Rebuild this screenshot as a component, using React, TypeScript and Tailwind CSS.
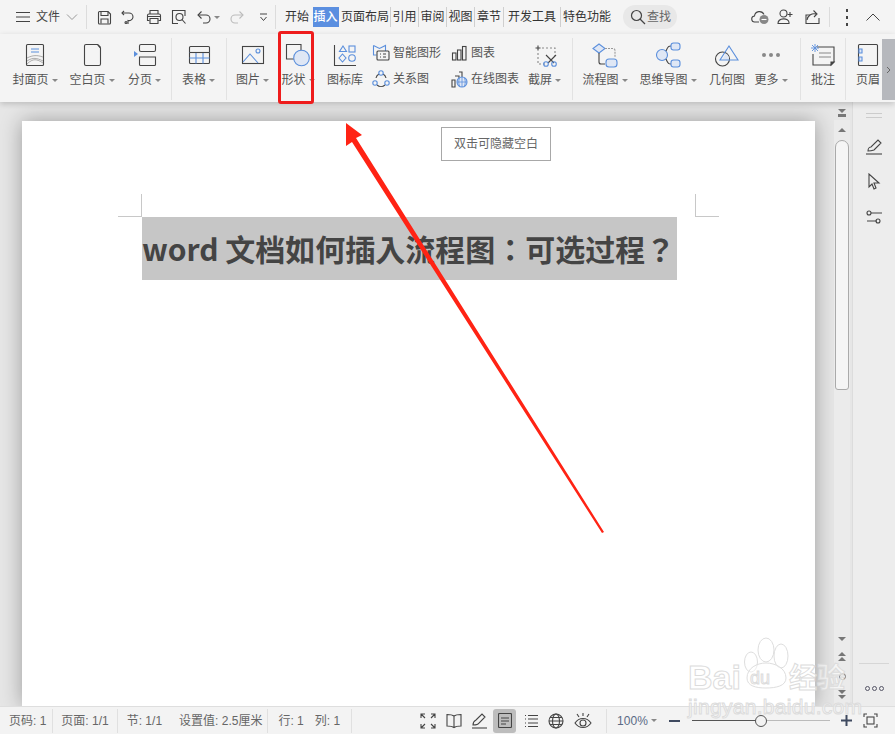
import type { ReactNode } from 'react';

const dark = '#444';
const blue = '#5b8fdc';
const fill = '#dfe7f5';

function Svg({ w, h, children }: { w: number; h: number; children: ReactNode }) {
    return (
        <svg width={w} height={h} viewBox={`0 0 ${w} ${h}`} fill="none" stroke={dark} strokeWidth="1.1" className="block shrink-0">
            {children}
        </svg>
    );
}

function Caret() {
    return <span className="ml-[3px] inline-block h-0 w-0 border-x-[3px] border-t-[3px] border-x-transparent border-t-[#888] align-middle" />;
}

const coverIcon = (
    <Svg w={22} h={24}>
        <rect x="2.5" y="1.5" width="17" height="21" rx="1" />
        <path d="M7 6h8M7 9h8" stroke={blue} />
        <path d="M3 15c6-3 10-3 16-1M3 18c6-4 10-3 16 0M3 21c6-6 10-5 16-1" stroke="#999" strokeWidth="0.8" />
    </Svg>
);
const blankIcon = (
    <Svg w={20} h={24}>
        <path d="M2.5 3a1.5 1.5 0 0 1 1.5-1.5h11.5L18.5 5v16a1.5 1.5 0 0 1-1.5 1.5H4A1.5 1.5 0 0 1 2.5 21z" />
        <path d="M15 1.5h1.5l2 2V6z" fill={dark} stroke="none" />
    </Svg>
);
const breakIcon = (
    <Svg w={24} h={24}>
        <rect x="6.5" y="1.5" width="16" height="7" rx="1.5" />
        <path d="M6.5 14h16v7.5a1 1 0 0 1-1 1h-14a1 1 0 0 1-1-1z" />
        <path d="M1 8l4 3-4 3z" fill={blue} stroke="none" />
    </Svg>
);
const tableIcon = (
    <Svg w={24} h={22}>
        <rect x="2.5" y="2.5" width="20" height="17" rx="1" />
        <path d="M2.5 8.5h20M2.5 14h20M9 8.5v11M16 8.5v11" stroke={blue} />
        <path d="M2.5 8.5h20" stroke={dark} />
    </Svg>
);
const pictureIcon = (
    <Svg w={24} h={22}>
        <rect x="1.5" y="2.5" width="21" height="17" />
        <path d="M2 18l7-8 8 9" stroke={blue} />
        <circle cx="17" cy="7" r="2" stroke={blue} />
    </Svg>
);
const shapeIcon = (
    <Svg w={26} h={24}>
        <path d="M14 16H1.5V1.5H16V8" />
        <circle cx="16.5" cy="15" r="7.8" fill={fill} stroke={blue} />
    </Svg>
);
const iconLibIcon = (
    <Svg w={24} h={24}>
        <path d="M1.5 2v20.5H23" />
        <path d="M10 3l3.5 5.5h-7zM9.5 11l3.5 4-3.5 4-3.5-4z" stroke={blue} />
        <rect x="16" y="3" width="6" height="6" stroke={blue} />
        <circle cx="19" cy="15" r="3.3" stroke={blue} />
    </Svg>
);
const smartIcon = (
    <Svg w={18} h={18}>
        <path d="M1.5 1.5l6 3 6-3V7" stroke={blue} />
        <path d="M1.5 1.5V11h3" stroke={blue} />
        <rect x="5" y="7" width="12" height="9" rx="1" />
        <path d="M8 10h1M11 10h3M8 13h1M11 13h3" />
    </Svg>
);
const relationIcon = (
    <Svg w={18} h={18}>
        <path d="M4 8a6 6 0 0 1 3-4M11 4a6 6 0 0 1 3 4M13 15a6 6 0 0 1-8 0" />
        <circle cx="9" cy="3" r="2.2" stroke={blue} />
        <circle cx="3" cy="13" r="2.2" stroke={blue} />
        <circle cx="15" cy="13" r="2.2" stroke={blue} />
    </Svg>
);
const chartIcon = (
    <Svg w={16} h={16}>
        <rect x="1.5" y="8" width="3.5" height="7" />
        <rect x="6.5" y="5" width="3.5" height="10" />
        <rect x="11.5" y="1.5" width="3.5" height="13.5" />
    </Svg>
);
const onlineChartIcon = (
    <Svg w={18} h={18}>
        <path d="M2 10h3v7H2zM5 6h4v4M9 2h3v5" />
        <circle cx="12" cy="12" r="5" fill={fill} stroke={blue} />
        <path d="M7 12h10M12 7v10M9.5 8c-1 3-1 5 0 8M14.5 8c1 3 1 5 0 8" stroke={blue} strokeWidth="0.8" />
    </Svg>
);
const screenshotIcon = (
    <Svg w={24} h={24}>
        <path d="M5 2.5v5M2.5 5h5" />
        <path d="M9 5h13v8M5 10v11h7" stroke="#888" strokeDasharray="2 2" />
        <path d="M13 12l8 8M23 12l-8 8" stroke={dark} />
        <circle cx="13" cy="21" r="2.3" stroke={blue} />
        <circle cx="21" cy="21" r="2.3" stroke={blue} />
    </Svg>
);
const flowIcon = (
    <Svg w={26} h={26}>
        <path d="M7 2l6 4.5L7 11 1 6.5z" fill={fill} stroke={blue} />
        <path d="M13 6.5h8a2 2 0 0 1 2 2V15" stroke="#999" strokeDasharray="2 1" />
        <path d="M7 11v9a2 2 0 0 0 2 2h4" />
        <rect x="14" y="17" width="11" height="8" rx="3" fill={fill} stroke={blue} />
    </Svg>
);
const mindIcon = (
    <Svg w={26} h={26}>
        <circle cx="7" cy="13" r="5.5" fill={fill} stroke={blue} />
        <path d="M11 9c2-5 3-5 5-5M11 17c2 5 3 5 5 5" />
        <rect x="16" y="1" width="9" height="7" rx="2.5" fill={fill} stroke={blue} />
        <rect x="16" y="18" width="9" height="7" rx="2.5" fill={fill} stroke={blue} />
    </Svg>
);
const geoIcon = (
    <Svg w={26} h={24}>
        <circle cx="8.5" cy="16" r="7" />
        <path d="M8.5 16L12 10.5a7 7 0 0 1 3 6.5z" fill={fill} stroke="none" />
        <path d="M15 3l9 14H6z" stroke={blue} />
    </Svg>
);
const moreIcon = (
    <Svg w={20} h={6}>
        <circle cx="3" cy="3" r="2" fill="#888" stroke="none" />
        <circle cx="10" cy="3" r="2" fill="#888" stroke="none" />
        <circle cx="17" cy="3" r="2" fill="#888" stroke="none" />
    </Svg>
);
const commentIcon = (
    <Svg w={26} h={24}>
        <path d="M7 4h17v15l-3 3H3V11" />
        <path d="M9 10h12M9 14h12" stroke="#888" />
        <path d="M21 22l3-3h-3z" fill={dark} />
        <path d="M5 1v8M1 5h8M2 2l6 6M8 2l-6 6" stroke={blue} strokeWidth="0.9" />
    </Svg>
);
const headerIcon = (
    <Svg w={24} h={24}>
        <rect x="2.5" y="1.5" width="19" height="21" rx="1" />
        <path d="M3 6h3v4H3zM3 14h3v4H3z" fill={fill} stroke={blue} />
    </Svg>
);

function RibbonItem({ w, icon, label, caret }: { w: number; icon: ReactNode; label: string; caret?: boolean }) {
    return (
        <div style={{ width: w }} className="flex h-full shrink-0 flex-col items-center">
            <div className="flex h-[37px] items-center justify-center pt-[5px]">{icon}</div>
            <div className="mt-[1px] whitespace-nowrap text-[12px] leading-[16px] text-[#555]">
                {label}
                {caret && <Caret />}
            </div>
        </div>
    );
}

function Sep({ ml = 0 }: { ml?: number }) {
    return <div style={{ marginLeft: ml }} className="mt-[4px] h-[62px] w-[1px] shrink-0 bg-[#e2e2e2]" />;
}

function SmallItem({ icon, label }: { icon: ReactNode; label: string }) {
    return (
        <div className="flex h-[26px] items-center gap-[3px] whitespace-nowrap text-[12px] text-[#555]">
            <div className="flex w-[18px] justify-center">{icon}</div>
            {label}
        </div>
    );
}

const tabs = [
    { label: '开始', w: 28 },
    { label: '插入', w: 29, active: true },
    { label: '页面布局', w: 51, bar: true },
    { label: '引用', w: 28, bar: true },
    { label: '审阅', w: 28, bar: true },
    { label: '视图', w: 28, bar: true },
    { label: '章节', w: 29, bar: true },
    { label: '开发工具', w: 57, bar: true },
    { label: '特色功能', w: 52 },
];

function TopBar() {
    return (
        <div className="flex h-[34px] shrink-0 items-center bg-[#f4f4f4] pl-[16px]">
            <svg width="14" height="12" viewBox="0 0 14 12" stroke={dark} strokeWidth="1.1" className="shrink-0">
                <path d="M0 1.5h14M0 6h14M0 10.5h14" />
            </svg>
            <span className="ml-[6px] text-[12px] text-[#444]">文件</span>
            <svg width="12" height="8" viewBox="0 0 12 8" fill="none" stroke="#999" className="ml-[6px] shrink-0">
                <path d="M1 1.5l5 5 5-5" />
            </svg>
            <div className="ml-[8px] h-[24px] w-[1px] bg-[#dcdcdc]" />
            <div className="ml-[10px]">
                <Svg w={15} h={15}>
                    <path d="M1.5 2.5a1 1 0 0 1 1-1H11l2.5 2.5v9a1 1 0 0 1-1 1h-10a1 1 0 0 1-1-1z" />
                    <path d="M4 1.5v4h7v-4M4 13.5V9h7v4.5" />
                </Svg>
            </div>
            <div className="ml-[9px]">
                <Svg w={16} h={16}>
                    <path d="M1 4h7a4 4 0 0 1 4 4 4 4 0 0 1-5 3.5V15" />
                    <path d="M3 2L1 4l2 2" />
                    <circle cx="5" cy="13.5" r="1" />
                </Svg>
            </div>
            <div className="ml-[9px]">
                <Svg w={16} h={16}>
                    <path d="M4 5V1.5h8V5M3.5 11.5H1.5V6.5A1.5 1.5 0 0 1 3 5h10a1.5 1.5 0 0 1 1.5 1.5v5h-2" />
                    <path d="M4 9.5h8v5H4zM1.5 7.5h13" />
                </Svg>
            </div>
            <div className="ml-[9px]">
                <Svg w={16} h={16}>
                    <path d="M14 7V1.5H1.5v13H7" />
                    <circle cx="8.5" cy="8" r="3.5" />
                    <path d="M11 10.5l3.5 4" />
                </Svg>
            </div>
            <div className="ml-[10px]">
                <Svg w={14} h={14}>
                    <path d="M1 5h8a4 4 0 0 1 0 8H6" />
                    <path d="M4.5 1.5L1 5l3.5 3.5" />
                </Svg>
            </div>
            <Caret />
            <div className="ml-[10px]">
                <svg width="14" height="14" viewBox="0 0 14 14" fill="none" stroke="#bbb" strokeWidth="1.1" className="block">
                    <path d="M13 5H5a4 4 0 0 0 0 8h3" />
                    <path d="M9.5 1.5L13 5 9.5 8.5" />
                </svg>
            </div>
            <svg width="9" height="9" viewBox="0 0 9 9" fill="none" stroke={dark} className="ml-[15px] shrink-0">
                <path d="M1 1h7M1.5 4l3 3.5 3-3.5" />
            </svg>
            <div className="ml-[7px] h-[24px] w-[1px] bg-[#dcdcdc]" />
            <div className="ml-[7px] flex items-center">
                {tabs.map((t) => (
                    <div key={t.label} style={{ width: t.w }} className={`flex h-[20px] items-center justify-center whitespace-nowrap text-[12px] ${t.bar ? 'border-r border-[#cfcfcf]' : ''}`}>
                        <span className={t.active ? 'bg-[#5b8fe0] px-[1px] font-medium leading-[20px] text-white' : 'text-[#333]'}>{t.label}</span>
                    </div>
                ))}
            </div>
            <div className="ml-[10px] flex h-[24px] w-[54px] items-center rounded-full bg-[#e8e8e8] pl-[7px] text-[12px] text-[#666]">
                <svg width="16" height="16" viewBox="0 0 16 16" fill="none" stroke={dark} strokeWidth="1.2" className="shrink-0">
                    <circle cx="6.5" cy="6.5" r="5" />
                    <path d="M10 10l5 5" />
                </svg>
                <span className="ml-[1px]">查找</span>
            </div>
            <div className="ml-[74px]">
                <Svg w={18} h={16}>
                    <path d="M8 13H4a3 3 0 0 1-.5-6A5 5 0 0 1 13 5.5" />
                    <circle cx="13" cy="10.5" r="4.5" fill="#888" stroke="none" />
                    <path d="M10.5 10.5h5" stroke="#fff" />
                </Svg>
            </div>
            <div className="ml-[8px]">
                <Svg w={16} h={16}>
                    <circle cx="6.5" cy="4.5" r="3.5" />
                    <path d="M1 14.5c0-6 11-6 11-1v1zM13 3v5M10.5 5.5h5" />
                </Svg>
            </div>
            <div className="ml-[11px]">
                <Svg w={16} h={16}>
                    <path d="M6 6H2v8.5h13V9" />
                    <path d="M3 11c1-5 5-7 9-6M9.5 1.5L13 5l-3 3" />
                </Svg>
            </div>
            <div className="ml-[9px] h-[20px] w-[1px] bg-[#dcdcdc]" />
            <div className="ml-[16px] flex flex-col gap-[4px]">
                <span className="h-[3px] w-[2px] bg-[#444]" />
                <span className="h-[3px] w-[2px] bg-[#444]" />
                <span className="h-[3px] w-[2px] bg-[#444]" />
            </div>
            <svg width="14" height="8" viewBox="0 0 14 8" fill="none" stroke={dark} className="ml-[18px] shrink-0">
                <path d="M0.5 7.5L7 1l6.5 6.5" />
            </svg>
        </div>
    );
}

function Ribbon() {
    return (
        <div className="relative z-10 flex h-[68px] shrink-0 bg-[#f4f4f4] shadow-[0_2px_6px_rgba(0,0,0,0.18)]">
            <div className="flex min-w-0 flex-1 overflow-hidden pl-[8px]">
                <RibbonItem w={54} icon={coverIcon} label="封面页" caret />
                <RibbonItem w={60} icon={blankIcon} label="空白页" caret />
                <RibbonItem w={45} icon={breakIcon} label="分页" caret />
                <Sep ml={4} />
                <RibbonItem w={53} icon={tableIcon} label="表格" caret />
                <Sep ml={1} />
                <RibbonItem w={51} icon={pictureIcon} label="图片" caret />
                <RibbonItem w={40} icon={shapeIcon} label="形状" caret />
                <RibbonItem w={54} icon={iconLibIcon} label="图标库" />
                <div className="flex w-[78px] shrink-0 flex-col pt-[6px]">
                    <SmallItem icon={smartIcon} label="智能图形" />
                    <SmallItem icon={relationIcon} label="关系图" />
                </div>
                <div className="flex w-[74px] shrink-0 flex-col pt-[6px]">
                    <SmallItem icon={chartIcon} label="图表" />
                    <SmallItem icon={onlineChartIcon} label="在线图表" />
                </div>
                <RibbonItem w={41} icon={screenshotIcon} label="截屏" caret />
                <Sep ml={7} />
                <RibbonItem w={64} icon={flowIcon} label="流程图" caret />
                <RibbonItem w={62} icon={mindIcon} label="思维导图" caret />
                <RibbonItem w={56} icon={geoIcon} label="几何图" />
                <RibbonItem w={32} icon={moreIcon} label="更多" caret />
                <Sep ml={13} />
                <RibbonItem w={44} icon={commentIcon} label="批注" />
                <Sep />
                <RibbonItem w={44} icon={headerIcon} label="页眉" />
            </div>
            <div className="mb-[2px] mt-[5px] flex w-[13px] shrink-0 items-center justify-center bg-[#b6b8bd] text-[#666]">
                <svg width="5" height="8" viewBox="0 0 5 8" fill="none" stroke="#666">
                    <path d="M1 1l3 3-3 3" />
                </svg>
            </div>
        </div>
    );
}

function Page() {
    return (
        <div className="relative ml-[22px] mt-[19px] w-[793px] flex-1 bg-white shadow-[0_0_20px_rgba(0,0,0,0.32)]">
            <div className="absolute left-[419px] top-[6px] flex h-[34px] w-[110px] items-center justify-center border border-[#a8a8a8] bg-white text-[12px] text-[#666]">
                双击可隐藏空白
            </div>
            <div className="absolute left-[119px] top-[73px] h-[23px] w-[1px] bg-[#c8c8c8]" />
            <div className="absolute left-[96px] top-[95px] h-[1px] w-[24px] bg-[#c8c8c8]" />
            <div className="absolute left-[673px] top-[73px] h-[23px] w-[1px] bg-[#c8c8c8]" />
            <div className="absolute left-[673px] top-[95px] h-[1px] w-[24px] bg-[#c8c8c8]" />
            <div className="pl-[120px] pt-[96px]">
                <div className="flex h-[63px] w-[535px] items-center whitespace-nowrap bg-[#c6c6c6] font-['Noto_Sans_CJK_TC',sans-serif] text-[30px] font-bold text-[#444]">
                    word 文档如何插入流程图：可选过程？
                </div>
            </div>
        </div>
    );
}

function ScrollColumn() {
    const tri = 'h-0 w-0 border-x-[4px] border-x-transparent';
    return (
        <div className="flex w-[16px] shrink-0 flex-col items-center">
            <div className="flex h-[18px] flex-col items-center justify-center gap-[1px] pt-[3px]">
                <div className={`${tri} border-t-[4px] border-t-[#777]`} />
                <div className="h-[3px] w-[8px] border-x-[2px] border-b-[3px] border-[#777]" />
            </div>
            <div className="flex w-full flex-1 flex-col items-center bg-[#ebebeb]">
                <div className={`${tri} mt-[8px] border-b-[4px] border-b-[#777]`} />
                <div className="mt-[8px] h-[250px] w-[14px] rounded-t-[7px] rounded-b-[3px] border border-[#aaa] bg-[#f5f5f5]" />
                <div className="flex-1" />
                <div className={`${tri} border-t-[4px] border-t-[#777]`} />
                <div className={`${tri} mt-[11px] border-b-[4px] border-b-[#777]`} />
                <div className={`${tri} mt-[1px] border-b-[4px] border-b-[#777]`} />
                <div className="mt-[12px] h-[7px] w-[7px] rounded-full border border-[#777]" />
                <div className={`${tri} mt-[10px] border-t-[4px] border-t-[#777]`} />
                <div className={`${tri} mb-[7px] mt-[1px] border-t-[4px] border-t-[#777]`} />
            </div>
        </div>
    );
}

function SidePanel() {
    return (
        <div className="ml-[2px] flex w-[43px] shrink-0 flex-col items-center border-l border-[#dcdcdc] bg-[#ededed]">
            <div className="mt-[11px] h-[5px] w-[16px] border-y border-[#ccc]" />
            <div className="mt-[21px]">
                <Svg w={18} h={16}>
                    <path d="M3 12c0-3 2-4 3-4l7-7 3 3-7 7c0 0-3 1-6 1z" />
                    <path d="M1 15h16" />
                </Svg>
            </div>
            <div className="mt-[18px]">
                <Svg w={14} h={17}>
                    <path d="M2 1v13l3-3 2 5 2-1-2-5h5z" />
                </Svg>
            </div>
            <div className="mt-[20px]">
                <Svg w={17} h={14}>
                    <circle cx="3" cy="3" r="2" />
                    <path d="M5 3h11M1 11h10" />
                    <circle cx="12" cy="11" r="2" />
                </Svg>
            </div>
            <div className="flex-1" />
            <div className="mb-[22px] h-[1px] w-[30px] bg-[#d6d6d6]" />
            <div className="mb-[15px] flex gap-[2px]">
                <span className="h-[5px] w-[5px] rounded-full border border-[#556]" />
                <span className="h-[5px] w-[5px] rounded-full border border-[#556]" />
                <span className="h-[5px] w-[5px] rounded-full border border-[#556]" />
            </div>
        </div>
    );
}

function StatDivider({ ml }: { ml: number }) {
    return <div style={{ marginLeft: ml }} className="h-[24px] w-[1px] shrink-0 bg-[#e0e0e0]" />;
}

function StatusBar() {
    return (
        <div className="relative z-10 flex h-[28px] shrink-0 items-center border-t border-[#dedede] bg-[#f3f3f3] pl-[9px] text-[12px] text-[#666]">
            <span>页码: 1</span>
            <StatDivider ml={6} />
            <span className="ml-[8px]">页面: 1/1</span>
            <StatDivider ml={8} />
            <span className="ml-[9px]">节: 1/1</span>
            <span className="ml-[17px]">设置值: 2.5厘米</span>
            <StatDivider ml={5} />
            <span className="ml-[10px]">行: 1</span>
            <span className="ml-[11px]">列: 1</span>
            <StatDivider ml={11} />
            <div className="ml-[68px]">
                <Svg w={16} h={16}>
                    <path d="M1 5V1h4M1 1l4 4M15 5V1h-4M15 1l-4 4M1 11v4h4M1 15l4-4M15 11v4h-4M15 15l-4-4" />
                </Svg>
            </div>
            <div className="ml-[10px]">
                <Svg w={16} h={16}>
                    <path d="M8 3C6 1.5 4 1.5 1 1.5V13c3 0 5 0 7 1.5 2-1.5 4-1.5 7-1.5V1.5c-3 0-5 0-7 1.5zM8 3v11" />
                </Svg>
            </div>
            <div className="ml-[9px]">
                <Svg w={17} h={16}>
                    <path d="M2 12c0-3 1-4 3-5l6-6 3 3-6 6c-1 2-3 2-6 2z" />
                    <path d="M1 15h15" />
                </Svg>
            </div>
            <div className="ml-[5px] flex h-[24px] w-[23px] items-center justify-center rounded-[3px] bg-[#bdbdbd]">
                <Svg w={14} h={15}>
                    <rect x="0.5" y="0.5" width="13" height="14" rx="1" />
                    <path d="M3 5h8M3 8h8M3 11h5" />
                </Svg>
            </div>
            <div className="ml-[8px]">
                <Svg w={15} h={14}>
                    <path d="M4 1.5h10M1 1.5h1M4 5h10M1 5h1M4 9h10M1 9h1M4 12.5h10M1 12.5h1" />
                </Svg>
            </div>
            <div className="ml-[9px]">
                <Svg w={16} h={16}>
                    <circle cx="8" cy="8" r="7" />
                    <ellipse cx="8" cy="8" rx="3.5" ry="7" />
                    <path d="M1 8h14M2 4.5h12M2 11.5h12" />
                </Svg>
            </div>
            <div className="ml-[10px]">
                <Svg w={18} h={16}>
                    <path d="M1 10c4-6 12-6 16 0-4 6-12 6-16 0z" />
                    <circle cx="9" cy="10" r="3" />
                    <path d="M3 1l2 3M15 1l-2 3M9 0v3" />
                </Svg>
            </div>
            <StatDivider ml={14} />
            <span className="ml-[10px] text-[#5a6a85]">100%</span>
            <Caret />
            <div className="ml-[12px] h-[2px] w-[11px] bg-[#3f4a60]" />
            <div className="relative ml-[12px] flex h-[12px] w-[138px] items-center">
                <div className="h-[1px] w-[69px] bg-[#555]" />
                <div className="h-[1px] flex-1 bg-[#bbb]" />
                <div className="absolute left-[63px] top-0 h-[12px] w-[12px] rounded-full border border-[#555] bg-[#f3f3f3]" />
            </div>
            <svg width="11" height="11" viewBox="0 0 11 11" stroke="#3f4a60" strokeWidth="2" className="ml-[11px] shrink-0">
                <path d="M0 5.5h11M5.5 0v11" />
            </svg>
            <div className="ml-[11px]">
                <Svg w={15} h={15}>
                    <path d="M1 4V1h3M11 1h3v3M14 11v3h-3M4 14H1v-3" />
                    <rect x="4" y="4" width="7" height="7" />
                </Svg>
            </div>
        </div>
    );
}

function Watermark() {
    return (
        <div className="pointer-events-none absolute left-[688px] top-[636px] z-20 h-[98px] w-[207px] text-[rgba(255,255,255,0.55)] [-webkit-text-stroke:1px_#dcdcdc]">
            <svg width="52" height="56" viewBox="0 0 52 56" fill="rgba(255,255,255,0.45)" stroke="#dedede" className="absolute left-[53px] top-0">
                <ellipse cx="10" cy="26" rx="6.5" ry="10" />
                <ellipse cx="25" cy="14" rx="8" ry="12" />
                <ellipse cx="40" cy="20" rx="7" ry="12" />
                <path d="M6 42c0-10 10-15 19-15s20 5 20 15c0 8-10 10-20 10S6 50 6 42z" />
            </svg>
            <span className="absolute left-0 top-[21px] font-['Liberation_Sans',sans-serif] text-[34px] font-bold leading-[40px]">Bai</span>
            <span className="absolute left-[62px] top-[30px] font-['Liberation_Sans',sans-serif] text-[18px] leading-[24px]">du</span>
            <span className="absolute left-[101px] top-[22px] font-['Noto_Sans_CJK_SC',sans-serif] text-[28px] font-bold leading-[36px]">经验</span>
            <span className="absolute left-0 top-[58px] font-['Liberation_Sans',sans-serif] text-[21px] leading-[26px] tracking-[0.3px]">jingyan.baidu.com</span>
        </div>
    );
}

export default function App() {
    return (
        <div className="relative flex h-[734px] w-[895px] flex-col overflow-hidden bg-[#e6e6e6] font-['Liberation_Sans','Noto_Sans_CJK_SC',sans-serif]">
            <TopBar />
            <Ribbon />
            <div className="flex min-h-0 flex-1">
                <div className="flex min-w-0 flex-1 flex-col overflow-hidden">
                    <Page />
                </div>
                <ScrollColumn />
                <SidePanel />
            </div>
            <StatusBar />
            <div className="absolute left-[278px] top-[31px] z-20 h-[73px] w-[36px] rounded-[3px] border-[3px] border-[#ee1c1c]" />
            <svg width="895" height="734" viewBox="0 0 895 734" className="pointer-events-none absolute left-0 top-0 z-20">
                <path d="M346 123L362 135 356 138 604 532 602 533 352 142 346 146z" fill="#ff2314" />
            </svg>
            <Watermark />
        </div>
    );
}
